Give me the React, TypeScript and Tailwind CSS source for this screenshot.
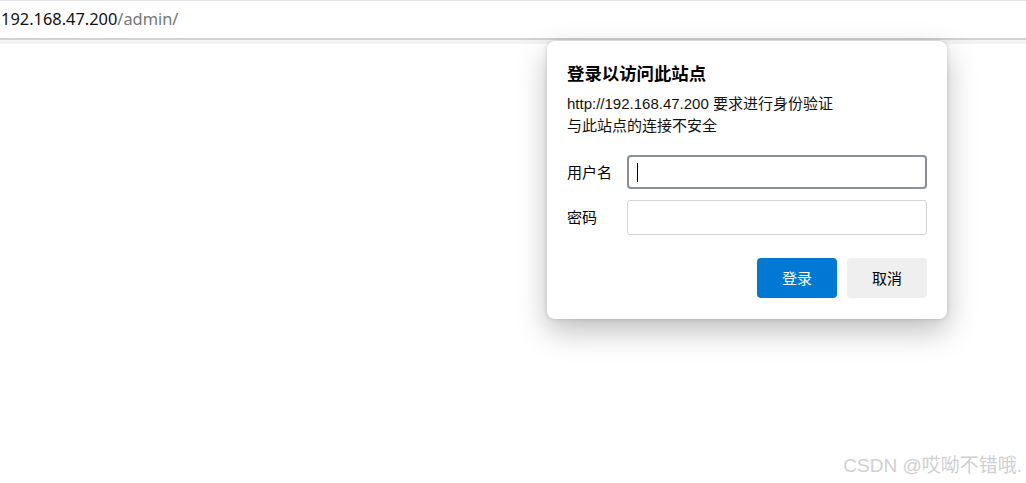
import React from "react";

export default function App() {
  return (
    <div className="relative w-[1026px] h-[483px] overflow-hidden bg-white font-['Noto_Sans','Noto_Sans_CJK_SC',sans-serif] text-black">
      {/* address bar */}
      <div className="h-px bg-[#e3e3e3]" />
      <div className="h-[37px] flex items-center pl-px text-[16.4px] leading-none">
        <span className="text-[#111]">192.168.47.200</span>
        <span className="text-[#767676]">/admin/</span>
      </div>
      <div className="h-[2px] bg-[#d2d2d2]" />
      <div className="h-[4px] bg-[#f2f2f2]" />

      {/* auth dialog */}
      <div className="absolute left-[547px] top-[41px] w-[400px] h-[278px] rounded-[8px] bg-white shadow-[0_12px_30px_rgba(0,0,0,0.26),0_0_4px_rgba(0,0,0,0.16)] px-5 pt-5 pb-5 flex flex-col">
        <div className="text-[17.4px] leading-[24px] font-bold font-['Noto_Sans_CJK_SC',sans-serif]">登录以访问此站点</div>
        <div className="mt-2 text-[15px] leading-[22px] text-[#111] font-['Liberation_Sans','Noto_Sans_CJK_SC',sans-serif]">
          <div>http://192.168.47.200 要求进行身份验证</div>
          <div>与此站点的连接不安全</div>
        </div>
        <div className="mt-[18px] flex items-center">
          <div className="w-[60px] text-[15px]">用户名</div>
          <div className="flex-1 h-[34px] rounded-[4px] border-2 border-[#8b8f94] flex items-center pl-[8px]">
            <div className="w-px h-[19px] bg-black" />
          </div>
        </div>
        <div className="mt-[11px] flex items-center">
          <div className="w-[60px] text-[15px]">密码</div>
          <div className="flex-1 h-[35px] rounded-[3px] border border-[#d3d3d3]" />
        </div>
        <div className="mt-[23px] flex justify-end gap-[10px]">
          <button className="w-[80px] h-[40px] rounded-[4px] bg-[#0078d4] text-white text-[15px]">登录</button>
          <button className="w-[80px] h-[40px] rounded-[4px] bg-[#efefef] text-black text-[15px]">取消</button>
        </div>
      </div>

      {/* watermark */}
      <div className="absolute right-[4px] top-[455px] text-[19px] leading-[22px] text-[#cfcfcf] whitespace-nowrap font-['Liberation_Sans','Noto_Sans_CJK_SC',sans-serif]">
        CSDN @哎呦不错哦.
      </div>
    </div>
  );
}
